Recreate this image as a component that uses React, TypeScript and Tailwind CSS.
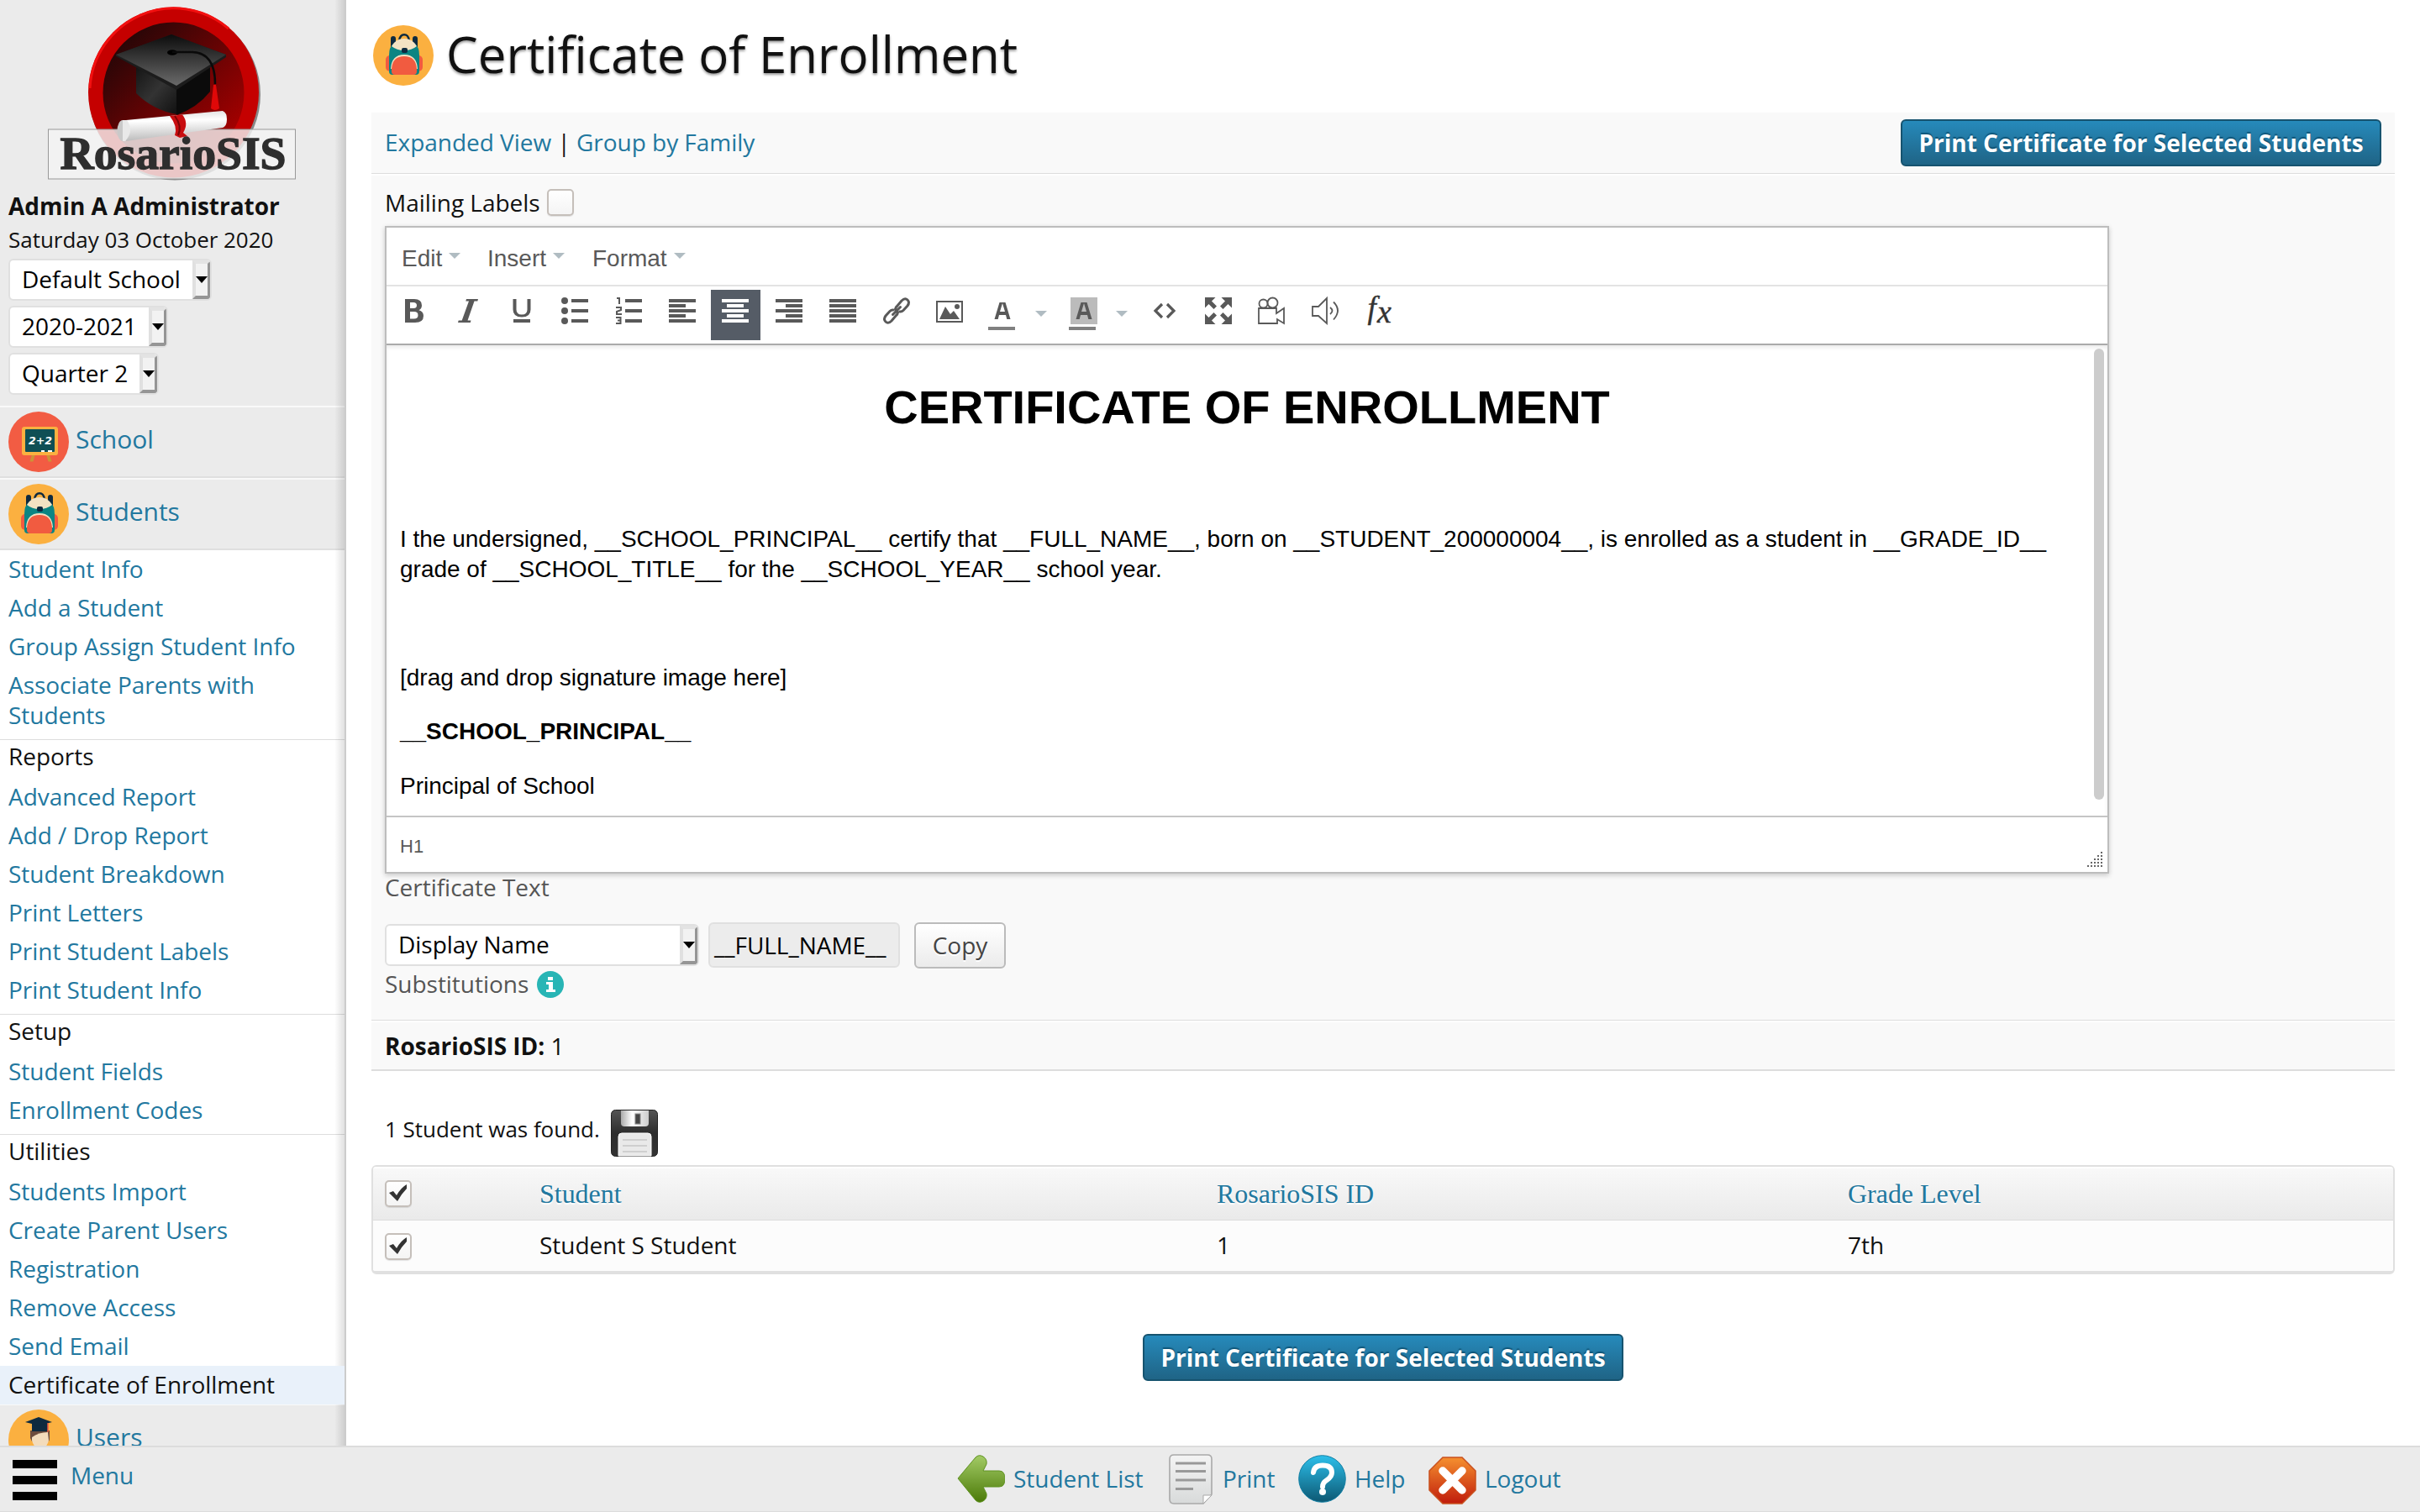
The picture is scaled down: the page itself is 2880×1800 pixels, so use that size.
import React from "react";

const heading = "font-['Open_Sans',sans-serif] tracking-[-0.03px]";

function SelectBox({ label, className }: { label: string; className: string }) {
  return (
    <div className={`flex h-[50px] overflow-hidden rounded-[6px] border-2 border-[#e0e0e0] bg-white ${className}`}>
      <span className="flex-1 whitespace-nowrap pl-[14px] text-[28px] leading-[45px] text-black">{label}</span>
      <span className="-mr-px flex w-[22px] items-center justify-center border-t-4 border-r-4 border-b-4 border-l-4 border-t-[#e3e3e3] border-r-[#959595] border-b-[#959595] border-l-[#e0e0e0] bg-[#f2f2f2]">
        <svg viewBox="0 0 14 8" className="h-2 w-[14px] shrink-0"><path d="M0 0h14L7 8z" fill="#000" /></svg>
      </span>
    </div>
  );
}

function Backpack({ className = "" }: { className?: string }) {
  return (
    <svg viewBox="0 0 72 72" className={`h-[72px] w-[72px] shrink-0 ${className}`}>
      <circle cx="36" cy="36" r="36" fill="#fbb040" />
      <rect x="15" y="36" width="44" height="19" rx="5" fill="#f15b40" />
      <rect x="21" y="13" width="6" height="20" rx="3" fill="#0e2a3f" />
      <rect x="47" y="13" width="6" height="20" rx="3" fill="#0e2a3f" />
      <path d="M31.500 18c0-9 11-9 11 0" fill="none" stroke="#0e2a3f" strokeWidth="2.600" />
      <path d="M19 55V36q0-10 5-14h26q5 4 5 14v19q0 4-4 4H23q-4 0-4-4z" fill="#0b8583" />
      <path d="M22 25q5-9 15-9t15 9q-6 5-15 5t-15-5z" fill="#f3e2c3" />
      <rect x="34" y="27" width="7" height="6" rx="2" fill="#0e2a3f" />
      <path d="M21 52q1-17 16-17t16 17" fill="#f3e2c3" />
      <path d="M22 52q1-15 15-15t15 15v3q0 4-4 4H26q-4 0-4-4z" fill="#f15b40" />
    </svg>
  );
}

function SchoolIcon() {
  return (
    <svg viewBox="0 0 72 72" className="h-[72px] w-[72px] shrink-0">
      <circle cx="36" cy="36" r="36" fill="#f25c43" />
      <path d="M28 51l4 0-2.500 8.500h-4zM45 51h4l2.500 8.500h-4z" fill="#ce9238" />
      <rect x="16" y="18" width="43" height="34" rx="3" fill="#fbb040" />
      <rect x="20" y="21" width="35" height="27" rx="1" fill="#0f4f55" />
      <text x="24" y="39" fontFamily="DejaVu Sans" fontWeight="bold" fontStyle="italic" fontSize="13" textLength="28" lengthAdjust="spacingAndGlyphs" fill="#fff">2+2</text>
      <path d="M39 47h4M47 47h5" stroke="#fff" strokeWidth="2" />
    </svg>
  );
}

function UserIcon() {
  return (
    <svg viewBox="0 0 72 72" className="h-[72px] w-[72px] shrink-0">
      <circle cx="36" cy="36" r="36" fill="#fbb040" />
      <path d="M26 25h23v9q0 4-2 4H28q-2-4-2-4z" fill="#6d4c3d" />
      <path d="M28 33q8-6 19-6l1 10q-3 10-10 10t-10-10z" fill="#f3dcbc" />
      <path d="M28 15h19v11H28z" fill="#0e2a3f" />
      <path d="M36 9l16 6-16 4-16-4z" fill="#0e2a3f" />
      <path d="M47 16v11" stroke="#f15b40" strokeWidth="1.500" />
    </svg>
  );
}

function Logo() {
  return (
    <svg viewBox="0 0 300 220" className="ml-[55px] block h-[220px] w-[300px]">
      <defs>
        <linearGradient id="disc" x1="0" y1="0" x2="1" y2="1">
          <stop offset="0.150" stopColor="#2a0607" /><stop offset="0.850" stopColor="#a30000" />
        </linearGradient>
        <linearGradient id="board" x1="0" y1="0" x2="0" y2="1">
          <stop offset="0" stopColor="#0c0c0c" /><stop offset="1" stopColor="#6a6a6a" />
        </linearGradient>
        <linearGradient id="capl" x1="0" y1="0" x2="1" y2="1">
          <stop offset="0" stopColor="#151515" /><stop offset="0.500" stopColor="#333" /><stop offset="1" stopColor="#111" />
        </linearGradient>
        <linearGradient id="paper" x1="0" y1="0" x2="0.080" y2="1">
          <stop offset="0" stopColor="#ddd" /><stop offset="0.350" stopColor="#fff" /><stop offset="1" stopColor="#bcbcbc" />
        </linearGradient>
      </defs>
      <circle cx="153" cy="112.500" r="102" fill="#444" opacity="0.600" />
      <circle cx="151.500" cy="110" r="101.500" fill="#c50000" />
      <path d="M52 105a100 100 0 0 1 165-71" fill="none" stroke="#f31010" strokeWidth="3" />
      <circle cx="151.500" cy="110.500" r="84" fill="url(#disc)" />
      <path d="M107 80l48 24v32q-28-5-48-25z" fill="url(#capl)" />
      <path d="M155 104l40-24v29q-15 19-40 28z" fill="#0b0b0b" />
      <path d="M83 65l66-24 65 24v3l-59 39-72-40z" fill="#1c1c1c" />
      <path d="M83 65l66-24 65 24-59 37z" fill="url(#board)" />
      <ellipse cx="150" cy="62.500" rx="6" ry="3.200" fill="#000" />
      <path d="M150 62h24q27 1 27 38" fill="none" stroke="#0a0a0a" strokeWidth="2.500" />
      <path d="M199 101h3l4 28q-5 4-10 0z" fill="#e00808" />
      <rect x="2.500" y="154" width="294" height="59" fill="#f3f3f3" fillOpacity="0.820" stroke="#999" strokeWidth="1" />
      <path d="M95 143l115-11q5 2 5 10t-5 10l-115 16z" fill="url(#paper)" />
      <ellipse cx="91" cy="155.500" rx="6.500" ry="12.500" fill="#c9c9c9" />
      <path d="M91 143h5q9 13-2 25h-3z" fill="#e9e9e9" />
      <path d="M147 138l15-1.500q8 10 1 21.500l5 4-9 2-6-3q4-10-6-23z" fill="#c80d10" />
      <path d="M153 138q9 12 4 23" fill="none" stroke="#790405" strokeWidth="2" />
      <text x="16.500" y="200.500" fontFamily="Liberation Serif" fontWeight="bold" fontSize="54" textLength="269" lengthAdjust="spacingAndGlyphs" fill="#2e2e2e" stroke="#2e2e2e" strokeWidth="1.300">RosarioSIS</text>
    </svg>
  );
}

const link = "text-[#22789f]";

function MenuItem({ label }: { label: string }) {
  return <a className={`block pt-1 pb-[6px] pl-[10px] pr-10 text-[28px] leading-[36px] ${link}`}>{label}</a>;
}

function MenuHeader({ label }: { label: string }) {
  return <div className="mt-[5px] h-[46px] border-t border-[#ddd] pt-px pl-[10px] text-[28px] leading-[36px] text-[#111]">{label}</div>;
}

function ModuleRow({ icon, label }: { icon: React.ReactNode; label: string }) {
  return (
    <div className="flex h-[86px] border-t-2 border-b-2 border-t-[#f9f9f9] border-b-[#dfdfdf] bg-[#ebebeb] pt-[5px] pl-[10px]">
      {icon}
      <span className={`ml-2 pt-[13px] text-[30px] leading-[40px] ${link}`}>{label}</span>
    </div>
  );
}

function Sidebar() {
  return (
    <aside className="relative h-[1721px] w-[412px] shrink-0 overflow-hidden border-r-2 border-[#ccc] bg-[#ebebeb]">
      <div className="h-[483px]">
        <Logo />
        <div className="pt-[3px] pl-[10px]">
          <div className="whitespace-nowrap text-[28px] font-bold leading-[44px] text-[#111]">Admin A Administrator</div>
          <div className="whitespace-nowrap text-[26px] leading-[36px] text-[#111]">Saturday 03 October 2020</div>
          <div className="mt-[5px] flex flex-col gap-[6px]">
            <SelectBox label="Default School" className="w-[242px]" />
            <SelectBox label="2020-2021" className="w-[190px]" />
            <SelectBox label="Quarter 2" className="w-[179px]" />
          </div>
        </div>
      </div>
      <ModuleRow icon={<SchoolIcon />} label="School" />
      <ModuleRow icon={<Backpack />} label="Students" />
      <nav className="bg-white">
        <MenuItem label="Student Info" />
        <MenuItem label="Add a Student" />
        <MenuItem label="Group Assign Student Info" />
        <MenuItem label="Associate Parents with Students" />
        <MenuHeader label="Reports" />
        <MenuItem label="Advanced Report" />
        <MenuItem label="Add / Drop Report" />
        <MenuItem label="Student Breakdown" />
        <MenuItem label="Print Letters" />
        <MenuItem label="Print Student Labels" />
        <MenuItem label="Print Student Info" />
        <MenuHeader label="Setup" />
        <MenuItem label="Student Fields" />
        <MenuItem label="Enrollment Codes" />
        <MenuHeader label="Utilities" />
        <MenuItem label="Students Import" />
        <MenuItem label="Create Parent Users" />
        <MenuItem label="Registration" />
        <MenuItem label="Remove Access" />
        <MenuItem label="Send Email" />
        <div className="relative z-10 bg-[#e9f1fa] pt-1 pb-[6px] pl-[10px] text-[28px] leading-[36px] text-[#111]">Certificate of Enrollment</div>
      </nav>
      <div className="-mt-px"><ModuleRow icon={<UserIcon />} label="Users" /></div>
      <div className="absolute inset-y-0 right-0 w-3 bg-gradient-to-r from-black/0 to-black/12" />
    </aside>
  );
}

function PrintButton() {
  return (
    <button className="h-[56px] w-[572px] whitespace-nowrap rounded-[6px] border-2 border-[#16536f] bg-gradient-to-b from-[#268abb] to-[#1f6486] text-[28px] font-bold leading-[52px] tracking-normal text-white [text-shadow:0_-2px_1px_rgba(0,60,90,0.6)]">
      Print Certificate for Selected Students
    </button>
  );
}

function Checkbox({ checked = false, className = "" }: { checked?: boolean; className?: string }) {
  return (
    <span className={`flex h-8 w-8 shrink-0 items-center justify-center rounded-[5px] border-2 border-[#c5bfba] bg-gradient-to-b from-white to-[#f4f4f4] shadow-[0_1px_1px_rgba(0,0,0,0.1)] ${className}`}>
      {checked && (
        <svg viewBox="0 0 24 22" className="h-[22px] w-6"><path d="M1 10l5-2 4 5Q15 4 22 0v5Q16 11 11 20z" fill="#333" /></svg>
      )}
    </span>
  );
}

function Caret() {
  return <svg viewBox="0 0 14 7" className="h-[7px] w-[14px] shrink-0"><path d="M0 0h14L7 7z" fill="#b0bcc2" /></svg>;
}

function Tool({ children, active = false }: { children: React.ReactNode; active?: boolean }) {
  return (
    <span className={`mt-1 flex h-[60px] w-[59.700px] shrink-0 mx-[2px] justify-center pt-[9px] ${active ? "bg-[#555c66] text-white" : "text-[#595959]"}`}>
      <svg viewBox="0 0 32 32" className="h-8 w-8 overflow-visible" fill="currentColor">{children}</svg>
    </span>
  );
}

function ColorTool({ filled = false }: { filled?: boolean }) {
  return (
    <span className="mt-1 flex h-[60px] w-[96px] shrink-0 pl-[14px] pt-[9px] text-[#595959]">
      <svg viewBox="0 0 34 40" className="h-10 w-[34px] shrink-0" fill="currentColor">
        {filled && <rect x="2" width="32" height="32" fill="#bbb" />}
        <path fillRule="evenodd" transform={filled ? "translate(2 0)" : "translate(1 0)"} d="M12.500 6h7L25.500 26h-4.200l-1.300-5h-8L10.700 26H6.500zM13 17h6l-3-10z" />
        <rect y="35" width="32" height="4" fill="#808080" />
      </svg>
      <span className="ml-[22px] mt-[16px]"><Caret /></span>
    </span>
  );
}

function Toolbar() {
  return (
    <div className="flex h-[68px] pl-[1.500px]">
      <Tool><path fillRule="evenodd" d="M5 2h11q9 0 9 7.500 0 4-3.500 5.700Q27 17 27 22q0 8-10 8H5zM11 6v7h4q4 0 4-3.500T15 6zM11 17v8.500h4.500q5 0 5-4.300T15.500 17z" /></Tool>
      <Tool><path d="M14 2h14l-.7 2.500h-3.800L15.500 27.500h4l-.7 2.500H4l.7-2.500h4L17 4.500h-3.700z" /></Tool>
      <Tool><path d="M5.500 2h4v12.500q0 6 6.500 6t6.500-6V2h4v12.500q0 9-10.500 9t-10.500-9zM6 26h20v4H6z" /></Tool>
      <Tool><circle cx="4" cy="4" r="4" /><circle cx="4" cy="16" r="4" /><circle cx="4" cy="28" r="4" /><path d="M12 2h20v4H12zM12 14h20v4H12zM12 26h20v4H12z" /></Tool>
      <Tool><path d="M12 2h20v4H12zM12 14h20v4H12zM12 26h20v4H12z" /><path d="M2 1h3v7M1 12h6v3l-5 2v3h6M1 24h5.500v7H1M3 27.500h3" fill="none" stroke="currentColor" strokeWidth="2" /></Tool>
      <Tool><path d="M0 2h32v4H0zM0 8h20v4H0zM0 14h32v4H0zM0 20h20v4H0zM0 26h32v4H0z" /></Tool>
      <Tool active><path d="M0 2h32v4H0zM6 8h20v4H6zM0 14h32v4H0zM6 20h20v4H6zM0 26h32v4H0z" /></Tool>
      <Tool><path d="M0 2h32v4H0zM12 8h20v4H12zM0 14h32v4H0zM12 20h20v4H12zM0 26h32v4H0z" /></Tool>
      <Tool><path d="M0 2h32v4H0zM0 8h32v4H0zM0 14h32v4H0zM0 20h32v4H0zM0 26h32v4H0z" /></Tool>
      <Tool>
        <g fill="none" stroke="currentColor" strokeWidth="3" strokeLinecap="round">
          <path d="M17 18q-5-4 0-8l5-6q4-4 7-1t0 7l-5 5.500q-2 2-4 1.500" />
          <path d="M15 14q5 4 0 8l-5 6q-4 4-7 1t0-7l5-5.500q2-2 4-1.500" />
          <path d="M11.500 20.500l9-9" />
        </g>
      </Tool>
      <Tool><path fillRule="evenodd" d="M0 4h32v26H0zM2 6v22h28V6z" /><path d="M4 26l7-15 6 9 4-4 7 10z" /><circle cx="25" cy="11" r="3" /></Tool>
      <ColorTool />
      <ColorTool filled />
      <Tool><path d="M13 8L5 16l8 8M19 8l8 8-8 8" fill="none" stroke="currentColor" strokeWidth="3.200" /></Tool>
      <Tool>
        <path d="M0 0h12.500L8 4.500l6 6L10.500 14l-6-6L0 12.500zM32 0v12.500L27.500 8l-6 6L18 10.500l6-6L19.500 0zM0 32V19.500L4.500 24l6-6L14 21.500l-6 6L12.500 32zM32 32H19.500l4.500-4.500-6-6L21.500 18l6 6 4.500-4.500z" />
      </Tool>
      <Tool>
        <g fill="none" stroke="currentColor" strokeWidth="1.800"><path d="M1 13h21v6l9-6v18l-8-5v5H1z" /><circle cx="6.500" cy="7.500" r="5" /><circle cx="17.500" cy="6.500" r="6" /></g>
      </Tool>
      <Tool>
        <g fill="none" stroke="currentColor" strokeWidth="1.800"><path d="M1 11h7l10-10v30L8 22H1z" /><path d="M22 12q5 4 0 8M26 5.500q10 10 0 21" /></g>
      </Tool>
      <Tool>
        <g fontFamily="Liberation Serif" fontStyle="italic" fill="#333" stroke="#333" strokeWidth="0.400">
          <text x="2.500" y="25" fontSize="37">f</text>
          <text x="14" y="30" fontSize="38">x</text>
        </g>
      </Tool>
    </div>
  );
}

function Editor() {
  return (
    <div className="flex h-[771px] w-[2052px] flex-col border-2 border-[#bdbdbd] bg-white font-['Liberation_Sans',sans-serif] tracking-[-0.01px] shadow-[0_2px_6px_rgba(0,0,0,0.2)]">
      <div className="flex h-[70px] border-b-2 border-[#e3e3e3] pl-[18px] text-[28px] leading-[73px] text-[#595959]">
        {[["Edit", "w-[102px]"], ["Insert", "w-[125px]"], ["Format", "w-[120px]"]].map(([t, w]) => (
          <span key={t} className={`flex ${w}`}>
            <span>{t}</span><span className="ml-2 mt-[30px] flex"><Caret /></span>
          </span>
        ))}
      </div>
      <Toolbar />
      <div className="relative flow-root h-[562px] border-t-2 border-[#aaa] px-4 text-[28px] leading-[36.400px] text-black shadow-[inset_0_3px_4px_rgba(0,0,0,0.08)]">
        <h1 className="mt-[37.500px] mb-[38px] text-center text-[56px] font-bold leading-[72.800px]">CERTIFICATE OF ENROLLMENT</h1>
        <p className="mb-7">&nbsp;</p>
        <p className="mb-7">I the undersigned, __SCHOOL_PRINCIPAL__ certify that __FULL_NAME__, born on __STUDENT_200000004__, is enrolled as a student in __GRADE_ID__ grade of __SCHOOL_TITLE__ for the __SCHOOL_YEAR__ school year.</p>
        <p className="mb-7">&nbsp;</p>
        <p className="mb-7">[drag and drop signature image here]</p>
        <p className="mb-7 font-bold">__SCHOOL_PRINCIPAL__</p>
        <p>Principal of School</p>
        <div className="absolute right-1 top-[4px] h-[537px] w-3 rounded-full bg-[#ccc]" />
      </div>
      <div className="flex h-[67px] items-start justify-between border-t-2 border-[#c5c5c5] pl-4 text-[22px] text-[#595959]">
        <span className="pt-[20px] leading-[30px]">H1</span>
        <svg viewBox="0 0 18 18" className="mr-[6px] mt-[41px] h-[18px] w-[18px]" fill="#666">
          <path d="M16 0h2v2h-2zM16 4h2v2h-2zM12 4h2v2h-2zM16 8h2v2h-2zM12 8h2v2h-2zM8 8h2v2H8zM16 12h2v2h-2zM12 12h2v2h-2zM8 12h2v2H8zM4 12h2v2H4zM16 16h2v2h-2zM12 16h2v2h-2zM8 16h2v2H8zM4 16h2v2H4zM0 16h2v2H0z" />
        </svg>
      </div>
    </div>
  );
}

function Floppy() {
  return (
    <svg viewBox="0 0 56 56" className="h-14 w-14">
      <defs>
        <linearGradient id="fl" x1="0" y1="0" x2="1" y2="0"><stop offset="0" stopColor="#aaa" /><stop offset="0.400" stopColor="#fff" /><stop offset="1" stopColor="#ccc" /></linearGradient>
        <linearGradient id="fb" x1="0" y1="0" x2="0" y2="1"><stop offset="0" stopColor="#555" /><stop offset="0.500" stopColor="#2d2d2d" /><stop offset="1" stopColor="#333" /></linearGradient>
      </defs>
      <rect x="0.500" y="0.500" width="55" height="55" rx="5" fill="url(#fb)" stroke="#222" />
      <path d="M12 1h33v15q0 4-4 4H16q-4 0-4-4z" fill="url(#fl)" />
      <rect x="29" y="5" width="6" height="12" fill="#444" stroke="#888" />
      <path d="M9 55V32q0-4 4-4h31q4 0 4 4v23z" fill="#e9e9e9" stroke="#fff" />
      <path d="M14 36h29M14 43h29M14 50h29" stroke="#c6c6c6" strokeWidth="1.500" />
    </svg>
  );
}

function Main() {
  return (
    <main className="w-[2438px] pl-[30px]">
      <div className="flex h-[134px] pl-[2px] pt-[30px]">
        <Backpack />
        <h1 className="-mt-[2px] ml-[15px] text-[60px] leading-[72px] text-[#111] [text-shadow:0_2px_3px_rgba(0,0,0,0.4)]">Certificate of Enrollment</h1>
      </div>
      <div className="flex h-[73px] items-start justify-between border-b border-[#ddd] bg-[#f9f9f9] px-4 pt-2">
        <div className="text-[28px] leading-[55px] text-[#111]">
          <a className={link}>Expanded View</a> | <a className={link}>Group by Family</a>
        </div>
        <PrintButton />
      </div>
      <div className="mt-[2px] h-[1006px] border-b border-[#ddd] bg-[#f9f9f9] pl-4">
        <div className="flex h-[60px] text-[28px] leading-[38px] text-[#111]">
          <span className="mt-[13px]">Mailing Labels</span><Checkbox className="ml-[8px] mt-4" />
        </div>
        <Editor />
        <div className="-mt-[2px] text-[28px] leading-[36px] text-[#555]">Certificate Text</div>
        <div className="mt-6 flex h-[55px]">
          <SelectBox label="Display Name" className="mt-[2px] w-[374px]" />
          <div className="ml-[11px] h-[54px] w-[228px] rounded-[6px] border-2 border-[#e0e0e0] bg-[#ececec] pl-[5px] text-[28px] leading-[50px] text-black">__FULL_NAME__</div>
          <button className="ml-[17px] h-[55px] w-[109px] rounded-[6px] border-2 border-[#bbb] bg-gradient-to-b from-white to-[#ebebeb] pb-px text-[28px] leading-[49px] text-[#444] [text-shadow:0_2px_0_white]">Copy</button>
        </div>
        <div className="flex text-[28px] leading-[36px] text-[#555]">
          <span>Substitutions</span>
          <svg viewBox="0 0 32 32" className="ml-[10px] mt-[3px] h-8 w-8"><circle cx="16" cy="16" r="16" fill="#28b5b5" /><path d="M13 7h6v4h-6zM11 13h8v9h3v3H11v-3h3v-6h-3z" fill="#fff" /></svg>
        </div>
      </div>
      <div className="mt-[2px] h-[58px] border-b-2 border-[#ddd] bg-[#f9f9f9] pl-4 text-[28px] leading-[56px] text-[#111]">
        <b>RosarioSIS ID:</b> 1
      </div>
      <div className="flex h-[112px] pl-4 pt-[46px] text-[26px] text-[#111]">
        <span className="pt-[6px] leading-[34px]">1 Student was found.</span>
        <span className="ml-[13px]"><Floppy /></span>
      </div>
      <div className="overflow-hidden rounded-[6px] border-2 border-b-4 border-[#e0e0e0] text-[28px]">
        <div className="flex h-[64px] border-b border-[#ddd] bg-gradient-to-b from-[#f9f9f9] to-[#eaeaea] pl-[14px] font-['Liberation_Serif',serif] text-[32px] leading-[64px] text-[#22789f] shadow-[inset_0_2px_0_white] [text-shadow:0_2px_1px_white]">
          <span className="w-[184px] pt-4"><Checkbox checked /></span>
          <span className="w-[806px]">Student</span><span className="w-[751px]">RosarioSIS ID</span><span>Grade Level</span>
        </div>
        <div className="flex h-[60px] bg-[#fcfcfc] pl-[14px] leading-[58px] text-[#111]">
          <span className="w-[184px] pt-[15px]"><Checkbox checked /></span>
          <span className="w-[806px]">Student S Student</span><span className="w-[751px]">1</span><span>7th</span>
        </div>
      </div>
      <div className="mt-[71px] flex justify-center"><PrintButton /></div>
    </main>
  );
}

function Footer() {
  return (
    <footer className={`flex h-[79px] border-t-2 border-b border-[#dcdcdc] bg-[#ebebeb] text-[28px] leading-[40px] ${link}`}>
      <div className="flex w-[1139px] pl-[15px]">
        <div className="mt-[15px] flex w-[53px] flex-col gap-[9px]">
          <div className="h-[10px] bg-black" /><div className="h-[10px] bg-black" /><div className="h-[10px] bg-black" />
        </div>
        <span className="ml-4 mt-[13px]">Menu</span>
      </div>
      <div className="flex w-[252px]">
        <svg viewBox="0 0 57 57" className="mt-[9px] h-[57px] w-[57px]">
          <defs><linearGradient id="ga" x1="0" y1="0" x2="0" y2="1"><stop offset="0" stopColor="#a3cb66" /><stop offset="1" stopColor="#4b7a08" /></linearGradient></defs>
          <path d="M1 28L22 3q4-4 9-1 5 3 4 9l-4 8h19q7 0 7 9.500T50 38H31l4 8q1 6-4 9-5 3-9-1z" fill="url(#ga)" stroke="#5e9120" />
        </svg>
        <span className="ml-[10px] mt-[17px]">Student List</span>
      </div>
      <div className="flex w-[154px]">
        <svg viewBox="0 0 52 60" className="mt-[8px] h-[60px] w-[52px]">
          <defs><linearGradient id="gp" x1="0" y1="0" x2="0" y2="1"><stop offset="0" stopColor="#f4f4f4" /><stop offset="1" stopColor="#d8dada" /></linearGradient></defs>
          <path d="M6 1h40q5 0 5 5v42L41 59H6q-5 0-5-5V6q0-5 5-5z" fill="url(#gp)" stroke="#a9a9a9" strokeWidth="1.600" />
          <path d="M41 59V49h10z" fill="#fff" stroke="#a9a9a9" />
          <path d="M8 11h36M8 20.500h36M8 31h36M8 41.500h21" stroke="#999" strokeWidth="3" />
        </svg>
        <span className="ml-[12px] mt-[17px]">Print</span>
      </div>
      <div className="flex w-[155px]">
        <svg viewBox="0 0 57 57" className="mt-[9px] h-[57px] w-[57px]">
          <defs><linearGradient id="gh" x1="0" y1="0" x2="0" y2="1"><stop offset="0" stopColor="#2cbfea" /><stop offset="1" stopColor="#0d5873" /></linearGradient></defs>
          <circle cx="28.500" cy="28.500" r="27.800" fill="url(#gh)" stroke="#1480a5" />
          <path d="M18 21q1-8.500 11-8.500 11 0 11 8.500 0 5-6 9-5 3-5 8" fill="none" stroke="#fff" strokeWidth="6" strokeLinecap="round" />
          <circle cx="29" cy="44" r="4" fill="#fff" />
        </svg>
        <span className="ml-[10px] mt-[17px]">Help</span>
      </div>
      <div className="flex">
        <svg viewBox="0 0 57 57" className="mt-[11px] h-[57px] w-[57px]">
          <defs><linearGradient id="gl" x1="0" y1="0" x2="0" y2="1"><stop offset="0" stopColor="#f5902f" /><stop offset="1" stopColor="#c01c0c" /></linearGradient></defs>
          <path d="M17 1h23l16 16v23L40 56H17L1 40V17z" fill="url(#gl)" stroke="#c9501e" strokeWidth="1.500" />
          <path d="M17 17l23 23M40 17L17 40" stroke="#fff" strokeWidth="9.500" strokeLinecap="round" />
        </svg>
        <span className="ml-[10px] mt-[17px]">Logout</span>
      </div>
    </footer>
  );
}

export default function App() {
  return (
    <div className={`h-[1800px] w-[2880px] overflow-hidden bg-white ${heading}`}>
      <div className="flex h-[1721px]">
        <Sidebar />
        <Main />
      </div>
      <Footer />
    </div>
  );
}
